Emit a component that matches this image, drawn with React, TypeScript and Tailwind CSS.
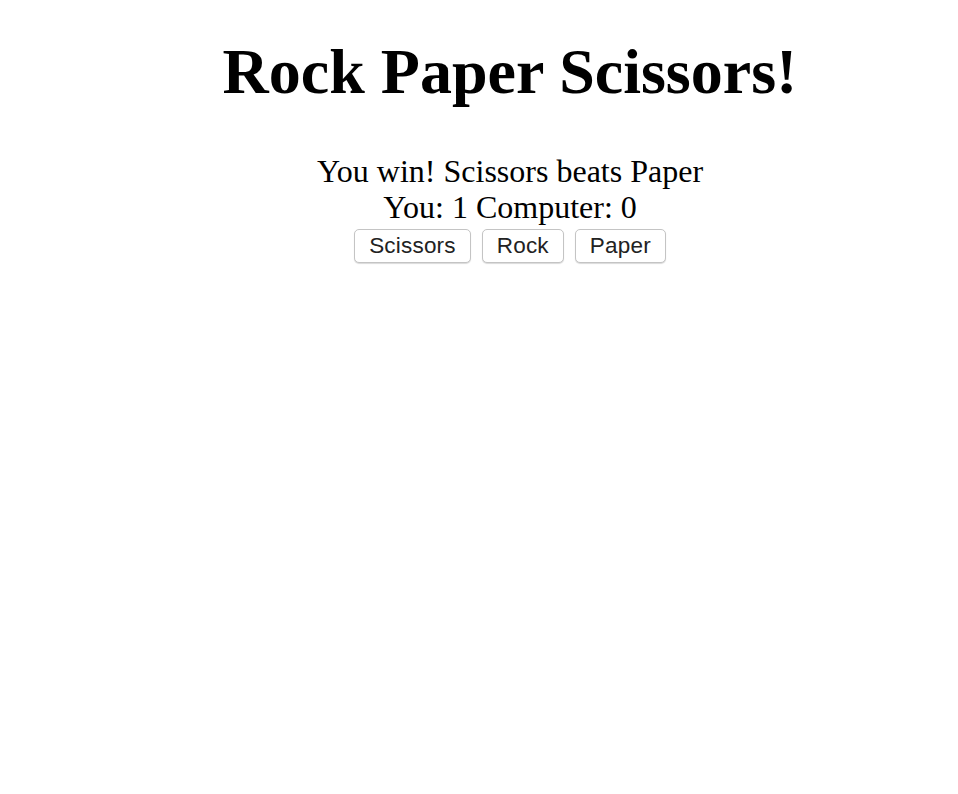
export default function App() {
  return (
    <div className="min-h-screen bg-white pl-[62px] text-center text-black" style={{ fontFamily: '"Liberation Serif", "Times New Roman", serif' }}>
      <h1 className="pt-[35px] text-[64px] font-bold leading-[74px]">Rock Paper Scissors!</h1>
      <div className="mt-[44px] text-[32px] leading-[36px]">
        <p>You win! Scissors beats Paper</p>
        <p>You: 1 Computer: 0</p>
      </div>
      <div className="mt-[4px] flex justify-center gap-[11px]">
        {["Scissors", "Rock", "Paper"].map((t) => (
          <button
            key={t}
            className="h-[34px] rounded-[5px] border border-[#c4c4c4] bg-white px-[14px] text-[22.5px] leading-[32px] tracking-[0.2px] text-[#222] shadow-[0_1px_1px_rgba(0,0,0,0.15)]"
            style={{ fontFamily: '"Liberation Sans", Arial, sans-serif' }}
          >
            {t}
          </button>
        ))}
      </div>
    </div>
  );
}
